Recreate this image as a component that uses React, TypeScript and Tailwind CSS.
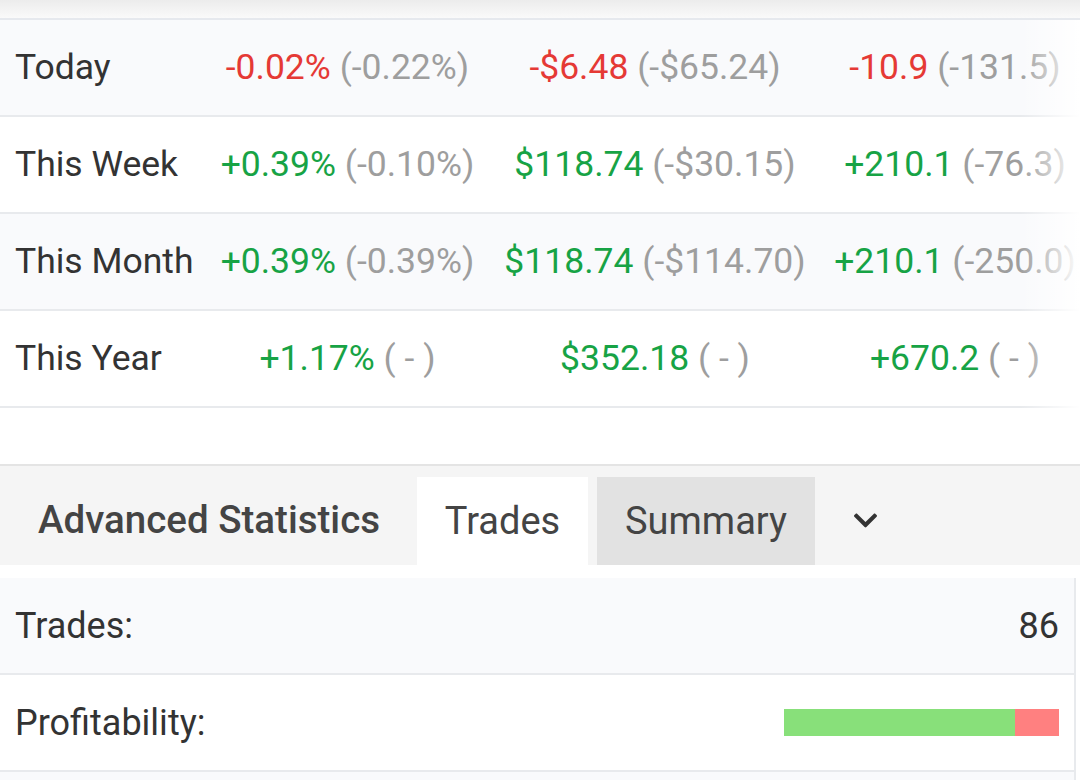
import { FaChevronDown } from "react-icons/fa";

interface Cell {
  main: string;
  sub: string;
  tone: "red" | "green";
}

interface PeriodRow {
  label: string;
  cells: Cell[];
}

const rows: PeriodRow[] = [
  {
    label: "Today",
    cells: [
      { main: "-0.02%", sub: "(-0.22%)", tone: "red" },
      { main: "-$6.48", sub: "(-$65.24)", tone: "red" },
      { main: "-10.9", sub: "(-131.5)", tone: "red" },
    ],
  },
  {
    label: "This Week",
    cells: [
      { main: "+0.39%", sub: "(-0.10%)", tone: "green" },
      { main: "$118.74", sub: "(-$30.15)", tone: "green" },
      { main: "+210.1", sub: "(-76.3)", tone: "green" },
    ],
  },
  {
    label: "This Month",
    cells: [
      { main: "+0.39%", sub: "(-0.39%)", tone: "green" },
      { main: "$118.74", sub: "(-$114.70)", tone: "green" },
      { main: "+210.1", sub: "(-250.0)", tone: "green" },
    ],
  },
  {
    label: "This Year",
    cells: [
      { main: "+1.17%", sub: "( - )", tone: "green" },
      { main: "$352.18", sub: "( - )", tone: "green" },
      { main: "+670.2", sub: "( - )", tone: "green" },
    ],
  },
];

export default function App() {
  return (
    <div
      className="w-[1080px] h-[780px] overflow-hidden bg-white text-[#333333]"
      style={{ fontFamily: "Roboto, 'Noto Sans', sans-serif" }}
    >
      {/* shadow of the header above */}
      <div className="h-[20px] bg-gradient-to-b from-[#ececec] to-[#fafafa] border-b-2 border-[#e6e9ee]" />

      {/* period table */}
      <div className="relative overflow-hidden">
        {rows.map((row, i) => (
          <div
            key={row.label}
            className={`grid grid-cols-[205px_285px_330px_270px] w-[1090px] h-[97px] items-center border-b-2 border-[#e8eaed] text-[35.5px] ${
              i % 2 === 0 ? "bg-[#f9fafc]" : "bg-white"
            }`}
          >
            <div className="pl-[15px] whitespace-nowrap">{row.label}</div>
            {row.cells.map((c, j) => (
              <div key={j} className="text-center whitespace-nowrap">
                <span className={c.tone === "red" ? "text-[#e53935]" : "text-[#17a345]"}>
                  {c.main}
                </span>{" "}
                <span className="text-[#9e9e9e]">{c.sub}</span>
              </div>
            ))}
          </div>
        ))}
        <div className="absolute top-0 right-0 h-[388px] w-[60px] bg-gradient-to-r from-transparent to-white pointer-events-none" />
      </div>

      <div className="h-[56px]" />

      {/* tabs */}
      <div className="h-[101px] bg-[#f5f5f5] border-t-2 border-[#e4e4e4] flex items-end">
        <div className="h-full w-[417px] flex items-center pl-[38px] pt-[8px] text-[38.5px] font-medium text-[#444444] whitespace-nowrap">
          Advanced Statistics
        </div>
        <div className="h-[88px] w-[171px] bg-white flex items-center justify-center text-[38px] text-[#444444]">
          Trades
        </div>
        <div className="h-[88px] w-[218px] ml-[9px] bg-[#e2e2e2] flex items-center justify-center text-[38px] text-[#444444]">
          Summary
        </div>
        <div className="h-full w-[100px] flex items-center justify-center pt-[10px]">
          <FaChevronDown className="text-[#333333] text-[27px]" />
        </div>
      </div>

      {/* summary rows */}
      <div className="pt-[13px] pr-[4px]">
        <div className="border-r-2 border-[#e8eaed]">
          <div className="h-[97px] flex items-center justify-between px-[15px] bg-[#f9fafc] border-b-2 border-[#e8eaed] text-[36px]">
            <span>Trades:</span>
            <span>86</span>
          </div>
          <div className="h-[97px] flex items-center justify-between px-[15px] bg-white border-b-2 border-[#e8eaed] text-[36px]">
            <span>Profitability:</span>
            <div className="flex h-[27px] w-[275px]">
              <div className="bg-[#88e07a]" style={{ width: `${(231 / 275) * 100}%` }} />
              <div className="flex-1 bg-[#ff8080]" />
            </div>
          </div>
          <div className="h-[40px] bg-[#f9fafc]" />
        </div>
      </div>
    </div>
  );
}
